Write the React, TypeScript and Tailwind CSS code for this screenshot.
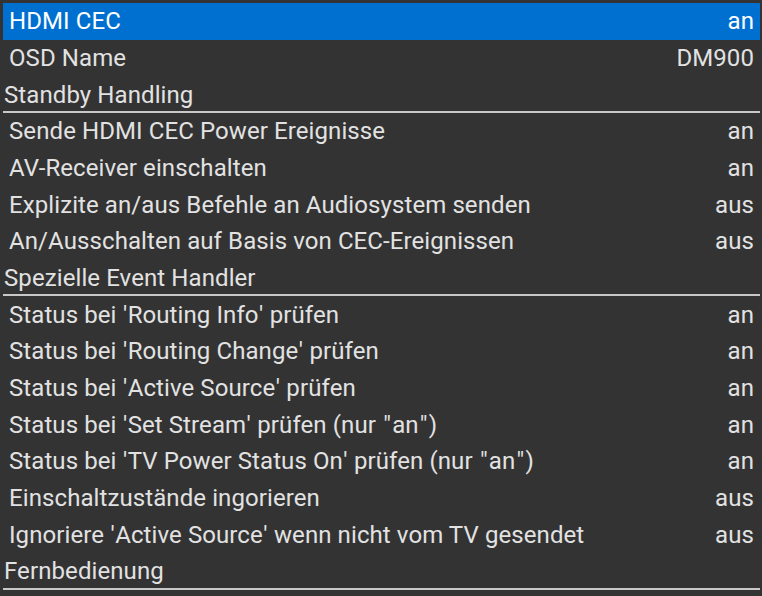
import React from "react";

type Row =
  | { kind: "item"; label: string; value: string; selected?: boolean }
  | { kind: "header"; label: string };

const rows: Row[] = [
  { kind: "item", label: "HDMI CEC", value: "an", selected: true },
  { kind: "item", label: "OSD Name", value: "DM900" },
  { kind: "header", label: "Standby Handling" },
  { kind: "item", label: "Sende HDMI CEC Power Ereignisse", value: "an" },
  { kind: "item", label: "AV-Receiver einschalten", value: "an" },
  { kind: "item", label: "Explizite an/aus Befehle an Audiosystem senden", value: "aus" },
  { kind: "item", label: "An/Ausschalten auf Basis von CEC-Ereignissen", value: "aus" },
  { kind: "header", label: "Spezielle Event Handler" },
  { kind: "item", label: "Status bei 'Routing Info' prüfen", value: "an" },
  { kind: "item", label: "Status bei 'Routing Change' prüfen", value: "an" },
  { kind: "item", label: "Status bei 'Active Source' prüfen", value: "an" },
  { kind: "item", label: "Status bei 'Set Stream' prüfen (nur \"an\")", value: "an" },
  { kind: "item", label: "Status bei 'TV Power Status On' prüfen (nur \"an\")", value: "an" },
  { kind: "item", label: "Einschaltzustände ingorieren", value: "aus" },
  { kind: "item", label: "Ignoriere 'Active Source' wenn nicht vom TV gesendet", value: "aus" },
  { kind: "header", label: "Fernbedienung" },
];

function Label({ text }: { text: string }) {
  const parts = text.split(/(['"])/);
  return (
    <span className="whitespace-pre">
      {parts.map((p, i) =>
        p === '"' ? (
          <span key={i} className="mx-[1.2px]">
            {p}
          </span>
        ) : p === "'" ? (
          <span key={i} className="mx-[0.4px]">
            {p}
          </span>
        ) : (
          <React.Fragment key={i}>{p}</React.Fragment>
        )
      )}
    </span>
  );
}

export default function App() {
  return (
    <div
      className="w-[762px] h-[596px] bg-[#333333] pt-[3px] pl-[3px] pr-[2px] overflow-hidden text-[#e2e2e2] text-[24px] tracking-[0.09px]"
      style={{ fontFamily: "Roboto, 'Noto Sans', sans-serif" }}
    >
      {rows.map((r, i) =>
        r.kind === "header" ? (
          <div
            key={i}
            className="h-[36.67px] flex items-center pl-[1px] pt-[2px] border-b-2 border-[#c8c8c8] leading-none"
          >
            <Label text={r.label} />
          </div>
        ) : (
          <div
            key={i}
            className={
              "h-[36.67px] flex items-center justify-between pl-[6px] pr-[6px] leading-none " +
              (r.selected ? "bg-[#0070d0] text-white" : "")
            }
          >
            <Label text={r.label} />
            <span>{r.value}</span>
          </div>
        )
      )}
    </div>
  );
}
